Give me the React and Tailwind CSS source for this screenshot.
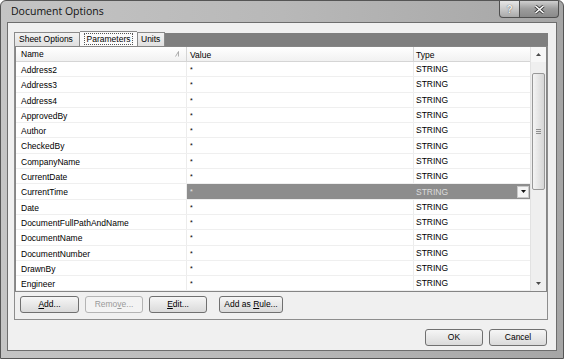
import React from 'react';

const params = [
  'Address2', 'Address3', 'Address4', 'ApprovedBy', 'Author', 'CheckedBy', 'CompanyName',
  'CurrentDate', 'CurrentTime', 'Date', 'DocumentFullPathAndName', 'DocumentName',
  'DocumentNumber', 'DrawnBy', 'Engineer',
];

function Btn({ children, disabled, w }) {
  return (
    <div
      className={`h-[17px] ${w} rounded-[3px] border flex items-center justify-center text-[8.5px] ${
        disabled
          ? 'border-[#b4b4b4] bg-[#f3f3f3] text-[#9a9a9a]'
          : 'border-[#707070] bg-linear-to-b from-[#f6f6f6] to-[#dadada] text-black'
      }`}
    >
      {children}
    </div>
  );
}

export default function App() {
  return (
    <div className="w-[564px] h-[359px] relative overflow-hidden font-['Liberation_Sans',sans-serif] border border-[#555] rounded-t-[6px] bg-linear-to-r from-[#c4c4c4] via-[#b8b8b8] to-[#a6a6a6] flex flex-col">
      {/* title bar */}
      <div className="h-[21px] flex items-center pl-[10px] text-[10.5px] text-[#111] font-['Open_Sans',sans-serif]">
        Document Options
      </div>
      <div className="absolute top-0 right-[4px] flex">
        <div className="w-[21px] h-[17px] border border-[#4f4f4f] border-t-0 rounded-bl-[4px] bg-linear-to-b from-[#e6e6e6] via-[#c9c9c9] to-[#a9a9a9] flex items-center justify-center text-[10px] font-bold text-[#f4f4f4] [text-shadow:0_0_1px_#333]">
          ?
        </div>
        <div className="w-[39px] h-[17px] border border-[#4f4f4f] border-t-0 border-l-0 rounded-br-[4px] bg-linear-to-b from-[#cfcfcf] via-[#9c9c9c] to-[#8a8a8a] flex items-center justify-center">
          <svg width="11" height="9" viewBox="0 0 11 9">
            <path d="M1.5 1 L9.5 8 M9.5 1 L1.5 8" stroke="#3a3a3a" strokeWidth="3.2" />
            <path d="M1.5 1 L9.5 8 M9.5 1 L1.5 8" stroke="#ffffff" strokeWidth="1.6" />
          </svg>
        </div>
      </div>

      {/* client area */}
      <div className="mx-[6px] h-[329px] border border-[#6d6d6d] bg-[#f0f0f0] pt-[9px] pl-[6px] pr-[8px] pb-[4px] flex flex-col">
        {/* tabs */}
        <div className="flex h-[14px] text-[8.5px] leading-none">
          <div className="w-[66px] border border-[#8a8a8a] border-b-0 bg-linear-to-b from-[#f2f2f2] to-[#e0e0e0] flex items-center pl-[4px]">
            Sheet Options
          </div>
          <div className="w-[57px] -mt-[1px] h-[15px] border-t border-[#8a8a8a] bg-[#fbfbfb] flex items-center justify-center">
            <span className="border border-dotted border-[#555] px-[2px] py-[1px]">Parameters</span>
          </div>
          <div className="w-[28px] border border-[#8a8a8a] border-b-0 bg-linear-to-b from-[#f2f2f2] to-[#e0e0e0] flex items-center pl-[3px]">
            Units
          </div>
          <div className="flex-1 bg-[#7f7f7f] mt-[1px]" />
        </div>

        {/* panel */}
        <div className="h-[274px] border border-t-0 border-[#8d8d8d] flex flex-col">
          {/* grid */}
          <div className="h-[246px] border border-[#858585] bg-white flex text-[8.5px] overflow-hidden">
            <div className="flex-1 flex flex-col">
              <div className="h-[15px] flex border-b border-[#d5d5d5] bg-linear-to-b from-[#ffffff] to-[#f1f1f1] leading-[16px]">
                <div className="w-[171px] border-r border-[#d5d5d5] pl-[5px] flex items-center justify-between pr-[7px]">
                  <span>Name</span>
                  <svg width="4" height="6" viewBox="0 0 4 6">
                    <path d="M0.5 5.5 L3.5 0.5 M3.5 0.5 L3.5 5.5" stroke="#9a9a9a" strokeWidth="0.8" fill="none" />
                  </svg>
                </div>
                <div className="w-[227px] border-r border-[#d5d5d5] pl-[3px]">Value</div>
                <div className="flex-1 pl-[2px]">Type</div>
              </div>
              {params.map((name) => {
                const sel = name === 'CurrentTime';
                return (
                  <div key={name} className="h-[15.3px] shrink-0 flex border-b border-[#efefef] leading-[16px]">
                    <div className="w-[171px] border-r border-[#ececec] pl-[5px]">{name}</div>
                    <div className={`w-[227px] border-r pl-[3px] ${sel ? 'bg-[#8d8d8d] text-[#e6e6e6] border-[#8d8d8d]' : 'border-[#ececec]'}`}>
                      <span className="text-[7px] align-top">*</span>
                    </div>
                    <div className={`flex-1 pl-[2px] flex items-center justify-between pr-[1px] ${sel ? 'bg-[#8d8d8d] text-[#dcdcdc]' : ''}`}>
                      <span>STRING</span>
                      {sel && (
                        <div className="w-[12px] h-[12px] bg-[#f4f4f4] border border-[#c8c8c8] flex items-center justify-center">
                          <svg width="5" height="3" viewBox="0 0 5 3"><path d="M0 0 H5 L2.5 3 Z" fill="#111" /></svg>
                        </div>
                      )}
                    </div>
                  </div>
                );
              })}
            </div>
            {/* scrollbar */}
            <div className="w-[16px] flex flex-col bg-[#efefef] border-l border-[#e2e2e2]">
              <div className="h-[15px] flex items-center justify-center bg-[#f7f7f7]">
                <svg width="5" height="3" viewBox="0 0 5 3"><path d="M0 3 H5 L2.5 0 Z" fill="#4a4a4a" /></svg>
              </div>
              <div className="flex-1 px-[1px] pt-[11px]">
                <div className="h-[117px] rounded-[2px] border border-[#989898] bg-linear-to-r from-[#f4f4f4] to-[#d6d6d6] flex items-center justify-center">
                  <svg width="5" height="5" viewBox="0 0 5 5">
                    <path d="M0 0.5 H5 M0 2.5 H5 M0 4.5 H5" stroke="#777" strokeWidth="0.8" />
                  </svg>
                </div>
              </div>
              <div className="h-[15px] flex items-center justify-center">
                <svg width="5" height="3" viewBox="0 0 5 3"><path d="M0 0 H5 L2.5 3 Z" fill="#4a4a4a" /></svg>
              </div>
            </div>
          </div>

          {/* grid buttons */}
          <div className="flex mt-[4px] ml-[5px]">
            <Btn w="w-[59px]"><span><u>A</u>dd...</span></Btn>
            <div className="w-[6px]" />
            <Btn w="w-[58px]" disabled><span>Remo<u>v</u>e...</span></Btn>
            <div className="w-[6px]" />
            <Btn w="w-[58px]"><span><u>E</u>dit...</span></Btn>
            <div className="w-[12px]" />
            <Btn w="w-[64px]"><span>Add as <u>R</u>ule...</span></Btn>
          </div>
        </div>

        {/* dialog buttons */}
        <div className="flex justify-end gap-[6px] mt-[9px] pr-[1px]">
          <Btn w="w-[58px]">OK</Btn>
          <Btn w="w-[58px]">Cancel</Btn>
        </div>
      </div>
    </div>
  );
}
